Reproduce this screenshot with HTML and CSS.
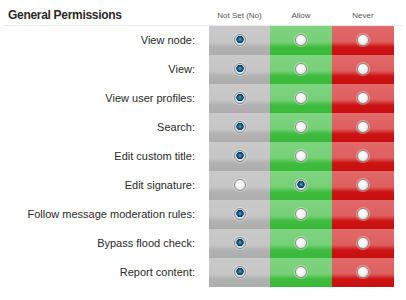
FILE: index.html
```
<!DOCTYPE html>
<html>
<head>
<meta charset="utf-8">
<link rel="stylesheet" href="styles.css">
</head>
<body>
<div class="perms">
  <div class="head">
    <h3 class="title">General Permissions</h3>
    <div class="colhead">Not Set (No)</div>
    <div class="colhead">Allow</div>
    <div class="colhead">Never</div>
  </div>
  <div class="row"><div class="label">View node:</div><div class="cell unset"><span class="radio on"></span></div><div class="cell allow"><span class="radio"></span></div><div class="cell never"><span class="radio"></span></div></div>
  <div class="row"><div class="label">View:</div><div class="cell unset"><span class="radio on"></span></div><div class="cell allow"><span class="radio"></span></div><div class="cell never"><span class="radio"></span></div></div>
  <div class="row"><div class="label">View user profiles:</div><div class="cell unset"><span class="radio on"></span></div><div class="cell allow"><span class="radio"></span></div><div class="cell never"><span class="radio"></span></div></div>
  <div class="row"><div class="label">Search:</div><div class="cell unset"><span class="radio on"></span></div><div class="cell allow"><span class="radio"></span></div><div class="cell never"><span class="radio"></span></div></div>
  <div class="row"><div class="label">Edit custom title:</div><div class="cell unset"><span class="radio on"></span></div><div class="cell allow"><span class="radio"></span></div><div class="cell never"><span class="radio"></span></div></div>
  <div class="row"><div class="label">Edit signature:</div><div class="cell unset"><span class="radio"></span></div><div class="cell allow"><span class="radio on"></span></div><div class="cell never"><span class="radio"></span></div></div>
  <div class="row"><div class="label">Follow message moderation rules:</div><div class="cell unset"><span class="radio on"></span></div><div class="cell allow"><span class="radio"></span></div><div class="cell never"><span class="radio"></span></div></div>
  <div class="row"><div class="label">Bypass flood check:</div><div class="cell unset"><span class="radio on"></span></div><div class="cell allow"><span class="radio"></span></div><div class="cell never"><span class="radio"></span></div></div>
  <div class="row"><div class="label">Report content:</div><div class="cell unset"><span class="radio on"></span></div><div class="cell allow"><span class="radio"></span></div><div class="cell never"><span class="radio"></span></div></div>
</div>
</body>
</html>
```
FILE: styles.css
```
html, body {
  margin: 0;
  padding: 0;
  background: #ffffff;
}
body {
  font-family: "Liberation Sans", Arial, sans-serif;
}
.perms {
  width: 394px;
}
.head {
  display: grid;
  height: 25px;
  border-bottom: 1px solid #e4ecf0;
  margin-left: 4px;
  width: 398px;
  grid-template-columns: 205px 61px 62px 62px;
  align-items: end;
}
.title {
  margin: 0;
  padding: 0 0 3px 4px;
  font-size: 12px;
  font-weight: bold;
  color: #2a2a2a;
  letter-spacing: -0.3px;
}
.colhead {
  font-size: 8px;
  color: #555;
  text-align: center;
  padding-bottom: 5px;
}
.row {
  display: grid;
  grid-template-columns: 209px 61px 62px 62px;
  height: 29px;
}
.label {
  text-align: right;
  padding-right: 14px;
  font-size: 11px;
  color: #2a2a2a;
  line-height: 29px;
  white-space: nowrap;
}
.cell {
  display: flex;
  align-items: center;
  justify-content: center;
  padding-bottom: 1px;
  box-sizing: border-box;
}
.unset {
  background: linear-gradient(to bottom, #c9c9c9 0%, #c6c6c6 55%, #b2b2b2 72%, #adadad 100%);
}
.allow {
  background: linear-gradient(to bottom, #80d480 0%, #76d076 55%, #40bc40 72%, #38b838 100%);
}
.never {
  background: linear-gradient(to bottom, #e26a6a 0%, #de5e5e 55%, #cc1414 72%, #c80e0e 100%);
}
.radio {
  width: 10px;
  height: 10px;
  border-radius: 50%;
  border: 1px solid #8e8e8e;
  background: radial-gradient(circle at 45% 40%, #ffffff 0%, #f2f2f2 45%, #cfcfcf 100%);
  box-shadow: 0 0 0 1px rgba(255,255,255,0.35);
}
.radio.on {
  border-color: #7a8a94;
  background: radial-gradient(circle at 50% 45%, #5c9cc0 0px, #1d5e82 2px, #0e3f5c 3.4px, #d8dde0 4px, #eef0f2 100%);
}
```
